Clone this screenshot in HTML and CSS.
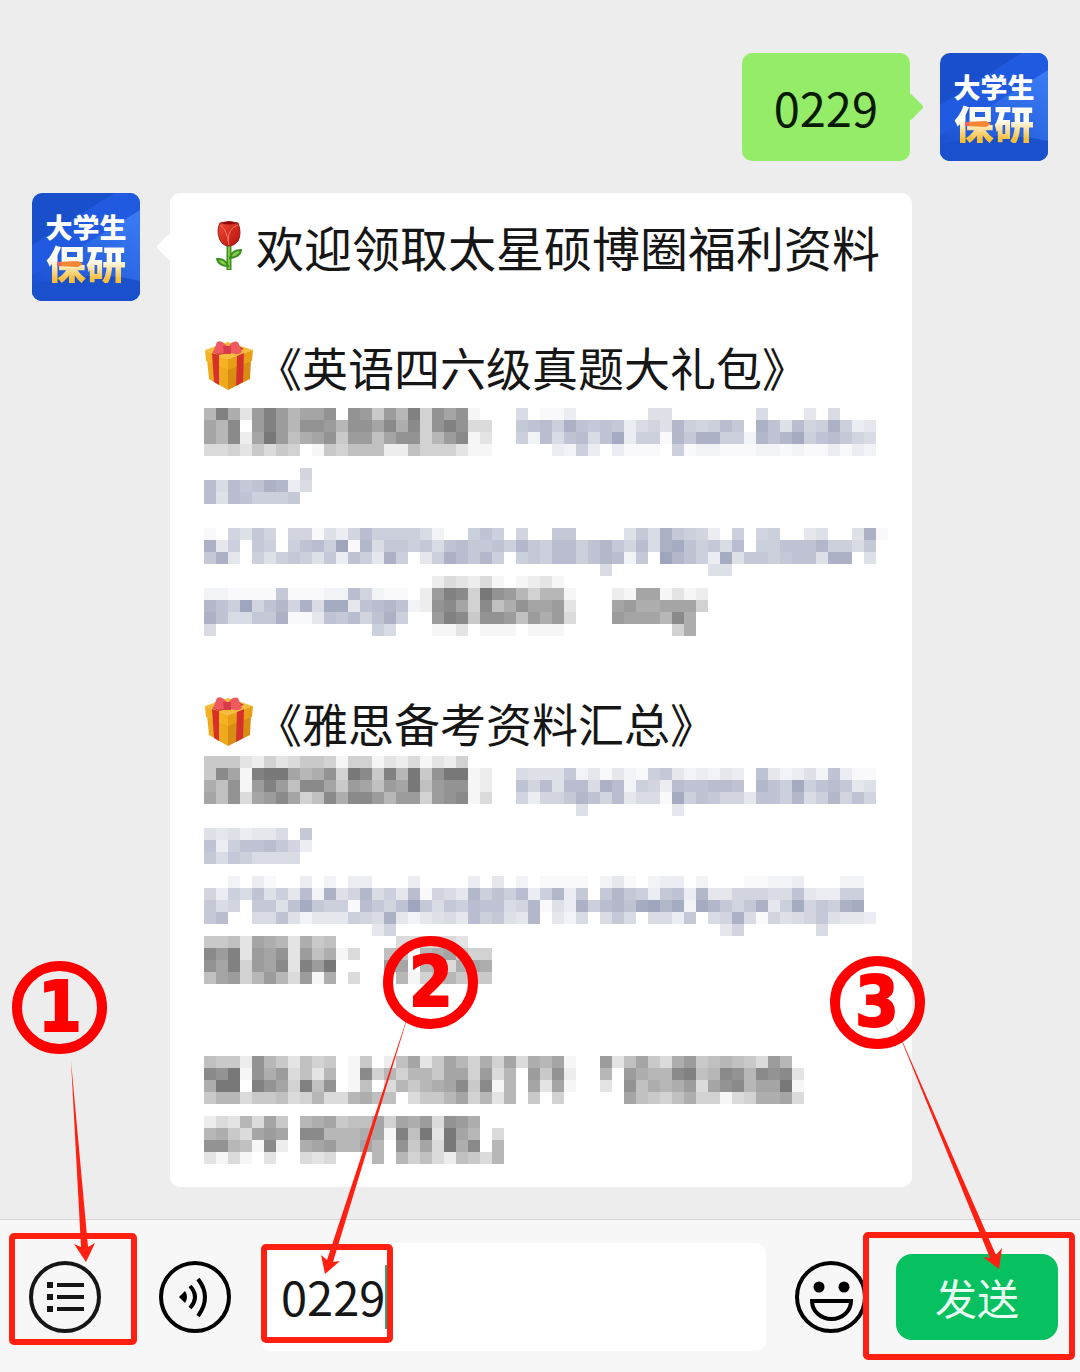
FILE: index.html
```html
<!DOCTYPE html>
<html lang="zh-CN">
  <head>
    <meta charset="UTF-8" />
    <meta name="viewport" content="width=device-width, initial-scale=1" />
    <title>回复 0229 领取资料</title>
    <link rel="stylesheet" href="styles.css">
  </head>
  <body>
    <!-- 公用图形 -->
    <svg class="defs" width="0" height="0" aria-hidden="true">
      <defs>
        <linearGradient id="sky" x1="0" y1="1" x2="1" y2="0">
          <stop offset="0" stop-color="#1a4fd0" />
          <stop offset="1" stop-color="#3b7df5" />
        </linearGradient>
        <linearGradient id="petal" x1="0" y1="0" x2="1" y2="1">
          <stop offset="0" stop-color="#ef4a35" />
          <stop offset="1" stop-color="#b8100e" />
        </linearGradient>
      </defs>
      <symbol id="avatar-bg" viewBox="0 0 108 108">
        <rect width="108" height="108" fill="#194fcb" />
        <path d="M0 52 L82 0 H108 V108 H0 Z" fill="#1f5ae0" />
        <path d="M36 62 L108 17 V92 Q70 80 0 98 V82 Z" fill="url(#sky)" />
        <path d="M0 92 Q60 76 108 88 V108 H0 Z" fill="#1a50cc" />
      </symbol>
      <symbol id="pencil" viewBox="0 0 26 6">
        <path d="M0 1 L21 0 L26 3 L21 6 L0 5 Z" fill="#f58634" />
        <path d="M0 1 h4 v4 h-4 Z" fill="#f0626e" />
      </symbol>
      <symbol id="rose" viewBox="0 0 50 50">
        <path d="M25 24 V49" stroke="#3c8f22" stroke-width="5" />
        <path d="M25 24 V48" stroke="#7ccb3f" stroke-width="2" />
        <path d="M26 37 Q28 29 37 29 Q36 36 26 37 Z M24 45 Q21 37 13 38 Q15 45 24 45 Z" fill="#8ccf4b" stroke="#3c8f22" stroke-width="2" />
        <path d="M16 2 Q25 -1 34 2 Q38 12 34 20 Q30 25 25 25 Q19 25 16 19 Q12 10 16 2 Z" fill="url(#petal)" stroke="#a31512" />
        <path d="M16 4 Q23 8 25 24 M34 4 Q24 7 24 20" fill="none" stroke="#f27b62" stroke-width="1" />
        <path d="M17 2 Q25 5 33 2 Q25 -1 17 2 Z" fill="#8f0d0d" />
      </symbol>
      <symbol id="gift" viewBox="0 0 50 50">
        <path d="M3 18 L24 26 V49 L5 38 Z" fill="#eeaa1c" />
        <path d="M24 26 L47 18 L46 38 L24 49 Z" fill="#d88d12" />
        <path d="M1 9 L24 1 L49 9 L24 18 Z" fill="#f6bd3c" />
        <path d="M1 9 L24 18 V29 L2 20 Z" fill="#f5b324" />
        <path d="M24 18 L49 9 L48 20 L24 29 Z" fill="#e89e17" />
        <path d="M8 12 L15 14 V44 L10 41 Z M33 15 L40 12 L39 41 L32 45 Z" fill="#d5302b" />
        <path d="M8 11 L33 4 L40 8 L15 14 Z" fill="#c93630" />
        <path d="M24 6 Q17 -2 13 1 L9 11 Q16 15 24 10 Q33 16 38 11 L34 1 Q29 -1 24 6 Z" fill="#ee5a60" />
        <path d="M19 5 h8 v8 h-7 Z" fill="#d83b48" />
      </symbol>
    </svg>

    <main class="chat">
      <div class="row mine">
        <div class="bubble green">0229</div>
        <div class="avatar">
          <svg class="avatar-bg"><use href="#avatar-bg" /></svg>
          <span class="avatar-top">大学生</span>
          <span class="avatar-bottom">保研</span>
          <svg class="pencil"><use href="#pencil" /></svg>
        </div>
      </div>
      <div class="row">
        <div class="avatar">
          <svg class="avatar-bg"><use href="#avatar-bg" /></svg>
          <span class="avatar-top">大学生</span>
          <span class="avatar-bottom">保研</span>
          <svg class="pencil"><use href="#pencil" /></svg>
        </div>
        <div class="bubble white">
          <p class="line title"><svg class="emoji"><use href="#rose" /></svg>欢迎领取太星硕博圈福利资料</p>
          <p class="line book"><svg class="emoji"><use href="#gift" /></svg>《英语四六级真题大礼包》</p>
          <svg class="mosaic first" data-block="first"></svg>
          <p class="line"><svg class="emoji"><use href="#gift" /></svg>《雅思备考资料汇总》</p>
          <svg class="mosaic second" data-block="second"></svg>
          <svg class="mosaic third" data-block="third"></svg>
        </div>
      </div>
    </main>

    <form class="toolbar" onsubmit="return false">
      <div class="tool menu">
        <button class="icon-btn" type="button" aria-label="菜单">
          <svg viewBox="0 0 72 72" fill="none" stroke="#161616" stroke-width="4">
            <circle cx="36" cy="36" r="34" />
            <path d="M18 24 h6 M18 36 h6 M18 48 h6" stroke-width="6" />
            <path d="M28 24 h27 M28 36 h27 M28 48 h27" />
          </svg>
        </button>
        <svg class="mark mark-1" viewBox="0 950 140 400">
          <rect x="12" y="1236" width="122" height="106" rx="2" />
          <path d="M71 1061 L81 1247 L74 1244 L86 1262 L95 1243 L88 1247 Z" />
          <ellipse cx="59.5" cy="1007.5" rx="42.5" ry="41.5" />
          <text x="60" y="1031" text-anchor="middle">1</text>
        </svg>
      </div>
      <button class="icon-btn" type="button" aria-label="语音">
        <svg viewBox="0 0 72 72" fill="none" stroke="#000" stroke-width="4">
          <circle cx="36" cy="36" r="34" />
          <path d="M20 36 L26 30 Q30 36 26 42 Z" fill="#000" stroke="none" />
          <path d="M31 25 Q41 36 31 47 M39 18 Q53 36 39 55" />
        </svg>
      </button>
      <div class="tool input-box">
        <input class="message" type="text" value="0229" aria-label="消息" />
        <span class="caret"></span>
        <svg class="mark mark-2" viewBox="250 920 240 430">
          <rect x="264" y="1247" width="126" height="93" rx="2" />
          <path d="M411 1006 L327 1260 L321 1255 L325 1274 L340 1261 L333 1262 Z" />
          <ellipse cx="430.5" cy="982.5" rx="42.5" ry="41.5" />
          <text x="431" y="1006" text-anchor="middle">2</text>
        </svg>
      </div>
      <button class="icon-btn" type="button" aria-label="表情">
        <svg viewBox="0 0 72 72" fill="none" stroke="#000" stroke-width="4">
          <circle cx="36" cy="36" r="34" />
          <path d="M17 40 H56 A19.5 18 0 0 1 17 40 Z" />
          <circle cx="24" cy="26" r="5.500" fill="#000" stroke="none" />
          <circle cx="49" cy="26" r="5.500" fill="#000" stroke="none" />
        </svg>
      </button>
      <div class="tool">
        <button class="send" type="submit">发送</button>
        <svg class="mark mark-3" viewBox="820 950 260 420">
          <rect x="866" y="1235" width="206" height="122" rx="2" />
          <path d="M894 1022 L990 1258 L983 1257 L999 1269 L1002 1248 L996 1255 Z" />
          <ellipse cx="877.5" cy="1002.5" rx="42.5" ry="41.5" />
          <text x="877" y="1026" text-anchor="middle">3</text>
        </svg>
      </div>
    </form>
    <script src="script.js"></script>
  </body>
</html>
```
FILE: styles.css
```css
* {
  box-sizing: border-box;
}
body {
  margin: 0;
  min-height: 100vh;
  display: flex;
  flex-direction: column;
  background-color: #ededed;
  color: #161616;
  font-family: "Noto Sans CJK SC", sans-serif;
  font-size: 46px;
  line-height: 60px;
}
.defs {
  position: absolute;
}

/* 聊天记录 */
.chat {
  flex: 1;
  padding: 53px 32px 32px;
}
.row {
  display: flex;
  align-items: flex-start;
  gap: 30px;
}
.mine {
  justify-content: flex-end;
  margin-bottom: 32px;
}
.avatar {
  position: relative;
  display: flex;
  flex: none;
  flex-direction: column;
  align-items: center;
  width: 108px;
  height: 108px;
  padding-top: 18px;
  border-radius: 10px;
  overflow: hidden;
  font-weight: 900;
}
.avatar-bg {
  position: absolute;
  inset: 0;
  width: 100%;
  height: 100%;
}
.avatar-top,
.avatar-bottom {
  position: relative;
}
.avatar-top {
  font-size: 27px;
  line-height: 32px;
  color: #fff;
}
.avatar-bottom {
  font-size: 40px;
  line-height: 40px;
  background: linear-gradient(#fffdf2 45%, #f9bf3a 90%);
  -webkit-background-clip: text;
  background-clip: text;
  color: transparent;
}
.pencil {
  position: absolute;
  left: 25px;
  top: 68px;
  width: 26px;
  height: 6px;
}
.bubble {
  position: relative;
  border-radius: 10px;
}
.bubble::before {
  content: "";
  position: absolute;
  top: 44px;
  width: 20px;
  height: 20px;
  border-radius: 3px;
  transform: rotate(45deg);
  background-color: inherit;
}
.green {
  padding: 24px 32px;
  background-color: #95ec69;
  color: #061a02;
  font-size: 47px;
}
.green::before {
  right: -10px;
}
.white {
  flex: 1;
  min-width: 0;
  margin-right: 136px;
  padding: 25px 24px 23px 34px;
  background-color: #fff;
}
.white::before {
  left: -10px;
}
.line {
  display: flex;
  align-items: center;
  height: 60px;
  margin: 0;
  padding-bottom: 4px;
  white-space: nowrap;
}
.title {
  font-size: 48px;
}
.book {
  margin-top: 60px;
}
.emoji {
  flex: none;
  width: 50px;
  height: 50px;
  margin-right: 2px;
}

/* 打码区域 */
.mosaic {
  display: block;
  width: 100%;
  shape-rendering: crispEdges;
}
.first {
  height: 228px;
  margin: 10px 0 58px;
}
.second {
  height: 228px;
  margin: 2px 0 72px;
}
.third {
  height: 108px;
}

/* 底部输入栏 */
.toolbar {
  display: flex;
  align-items: center;
  gap: 29px;
  padding: 23px 22px 21px 29px;
  border-top: 1px solid #d4d4d4;
  background-color: #f7f7f7;
}
.tool {
  position: relative;
}
.menu {
  margin-right: 29px;
}
.icon-btn {
  display: block;
  flex: none;
  width: 72px;
  height: 72px;
  padding: 0;
  border: none;
  background: none;
}
.icon-btn svg {
  display: block;
}
.input-box {
  flex: 1;
  min-width: 0;
}
.message {
  display: block;
  width: 100%;
  height: 108px;
  padding: 0 21px 3px;
  border: none;
  border-radius: 10px;
  outline: none;
  background-color: #fff;
  color: inherit;
  font: inherit;
  font-size: 47px;
}
.caret {
  position: absolute;
  left: 125px;
  top: 22px;
  width: 3px;
  height: 64px;
  background-color: #25a878;
}
.send {
  display: block;
  width: 162px;
  height: 86px;
  padding: 0;
  border: none;
  border-radius: 16px;
  background-color: #07c160;
  color: #e9fff2;
  font: inherit;
  font-size: 42px;
}

/* 步骤标注 */
.mark {
  position: absolute;
  z-index: 1;
  pointer-events: none;
}
.mark rect {
  fill: none;
  stroke: #ff2012;
  stroke-width: 6px;
}
.mark path {
  fill: #ff2012;
}
.mark ellipse {
  fill: none;
  stroke: #f00;
  stroke-width: 10px;
}
.mark text {
  fill: #f00;
  stroke: #f00;
  stroke-width: 2px;
  font-family: "DejaVu Sans Condensed", "DejaVu Sans", sans-serif;
  font-size: 70px;
  font-weight: bold;
}
.mark-1 {
  left: -29px;
  top: -311px;
  width: 140px;
  height: 400px;
}
.mark-2 {
  left: -10px;
  top: -323px;
  width: 240px;
  height: 430px;
}
.mark-3 {
  left: -76px;
  top: -304px;
  width: 260px;
  height: 420px;
}
```
FILE: script.js
```js
// 每个格子 12px，十六进制数字表示深浅，0 为透明
const CELL = 12;

// [行, 起始列, 颜色, 深浅]
const blocks = {
  first: [
    [0, 0, "gray", "8e93beb8aac0cb6b8e5cac10"],
    [1, 0, "gray", "a8d0beb8ccb8ccad9d5cec44"],
    [2, 0, "gray", "a8d2afb79ac6bb7acc58bd13"],
    [3, 0, "gray", "445364650165777227555311"],
    [0, 26, "blue", "601130000005500000006000406000"],
    [1, 26, "blue", "9ab8da9a93675c878b90da5b78d834"],
    [2, 26, "blue", "82b6ab6ae3881c9dd882cace8ab976"],
    [3, 26, "blue", "000328303111081221112212113132"],
    [5, 8, "blue", "7"],
    [6, 0, "blue", "b6b9adc36"],
    [7, 0, "blue", "b5ba8889"],
    [10, 0, "blue", "1075970771537b888862008a807009900005" + "96d98730807800450" + "05d1"],
    [11, 0, "blue", "d4809808ab8f1c69989" + "6ab99a8c98" + "bb8ac97b6dea896b088aaac8869"],
    [12, 0, "blue", "9d4085898593a84d804" + "8db9c80898" + "bb8acb290fca83e5998" + "9aa5dd05"],
    [13, 33, "blue", "6"],
    [13, 42, "blue", "55"],
    [14, 19, "gray", "24324101231"],
    [15, 0, "blue", "22111191112" + "2b7211"],
    [16, 0, "blue", "ca8f7ac7d6ee4abca2"],
    [17, 0, "blue", "da6699d114a9b7ad8"],
    [18, 0, "blue", "6"],
    [18, 14, "blue", "86"],
    [15, 18, "gray", "2bed5fcb85881" + "00021aa1312"],
    [16, 18, "gray", "2cda5d79caab3" + "000ab99aaa5"],
    [17, 19, "gray", "bed6ccb7b9b4000baaa8d9"],
    [18, 19, "gray", "1130111011100000000059"],
  ],
  second: [
    [0, 0, "gray", "6663253466515513241325"],
    [1, 0, "gray", "6da1effa89c5fd6e8f6cff12"],
    [2, 0, "gray", "97c1beb7dda6ba7baf7bcc12"],
    [3, 0, "gray", "a7c4abda57d9ddb8bb5bcd14"],
    [1, 26, "blue", "655592414218942324" + "30a42352a311"],
    [2, 26, "blue", "a7b5bb6db2873baabba0ca8e8ab945"],
    [3, 26, "blue", "73779ca7b4661e8a9774aa8c68c7a7"],
    [4, 31, "blue", "5"],
    [4, 39, "blue", "4"],
    [6, 0, "blue", "545344609"],
    [7, 0, "blue", "a38aab973"],
    [8, 0, "blue", "96986666"],
    [10, 0, "blue", "00203100302033000300003040201" + "11102410233020001122300022"],
    [11, 0, "blue", "7386a584b2d57c684b1764c8a8b38" + "c3909c9839a3c4477766a43388"],
    [12, 0, "blue", "9670995ae9881b97af9698baa67c1" + "53d8bcaefce2ec979d48e798de"],
    [13, 0, "blue", "9b0066a52444876d424564b8954c0" + "4260696066390" + "67d61756795443"],
    [14, 14, "blue", "47"],
    [14, 43, "blue", "47"],
    [14, 51, "blue", "6"],
    [15, 0, "gray", "6673a98396700000444443"],
    [16, 0, "gray", "dbe3bac3b791400770" + "89a655"],
    [17, 0, "gray", "cae5bad3ebf0000ba0894" + "9a9"],
    [18, 0, "gray", "7ab58b84b1904000815" + "78666"],
  ],
  third: [
    [0, 0, "gray", "7662c863756016027a36a8595a" + "498a100b37a649b678764b8"],
    [1, 0, "gray", "dcf1c9b473801d585886aa5b48" + "0b6c20080b988de78dc8dcd3"],
    [2, 0, "gray", "9ff0eca5e7c0170486" + "89ad6d18" + "0a3a10030c7989b4acd8aaf1"],
    [3, 0, "gray", "6884667458448977046" + "68a5838" + "060500000a7657955145" + "99a4"],
    [5, 0, "gray", "24384a6089a677a5a9b4cb9"],
    [6, 0, "gray", "8964aba0dd8889a1e7f3fa804"],
    [7, 0, "gray", "cc871d209ab88a80c6a4f9d08"],
    [8, 0, "gray", "3141030043400180857427648"],
  ],
};

function cellColor(tint, level) {
  if (tint === "blue") {
    const [r, g, b] = [6.4, 6, 4.4].map((step) => Math.round(255 - level * step));
    return `rgb(${r}, ${g}, ${b})`;
  }
  const v = 255 - level * 9;
  return `rgb(${v}, ${v}, ${v})`;
}

document.querySelectorAll(".mosaic").forEach((svg) => {
  blocks[svg.dataset.block].forEach(([row, col, tint, cells]) => {
    Array.from(cells).forEach((cell, i) => {
      const level = parseInt(cell, 16);
      if (!level) {
        return;
      }
      const rect = document.createElementNS("http://www.w3.org/2000/svg", "rect");
      rect.setAttribute("x", (col + i) * CELL);
      rect.setAttribute("y", row * CELL);
      rect.setAttribute("width", CELL);
      rect.setAttribute("height", CELL);
      rect.setAttribute("fill", cellColor(tint, level));
      svg.appendChild(rect);
    });
  });
});
```
